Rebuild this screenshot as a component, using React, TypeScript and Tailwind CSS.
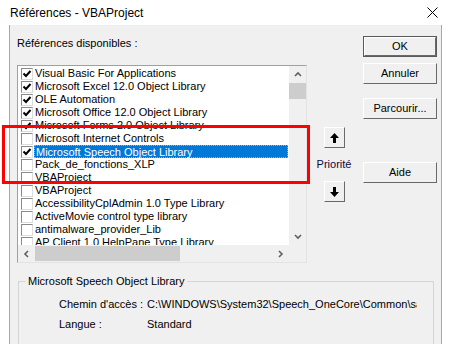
import React from "react";

type Ref = { name: string; checked: boolean; selected?: boolean };

const refs: Ref[] = [
	{ name: "Visual Basic For Applications", checked: true },
	{ name: "Microsoft Excel 12.0 Object Library", checked: true },
	{ name: "OLE Automation", checked: true },
	{ name: "Microsoft Office 12.0 Object Library", checked: true },
	{ name: "Microsoft Forms 2.0 Object Library", checked: true },
	{ name: "Microsoft Internet Controls", checked: false },
	{ name: "Microsoft Speech Object Library", checked: true, selected: true },
	{ name: "Pack_de_fonctions_XLP", checked: false },
	{ name: "VBAProject", checked: false },
	{ name: "VBAProject", checked: false },
	{ name: "AccessibilityCplAdmin 1.0 Type Library", checked: false },
	{ name: "ActiveMovie control type library", checked: false },
	{ name: "antimalware_provider_Lib", checked: false },
	{ name: "AP Client 1.0 HelpPane Type Library", checked: false },
];

function CheckBox({ checked }: { checked: boolean }) {
	return (
		<div className="w-[12px] h-[12px] ml-[3px] mr-[1px] shrink-0 bg-white border border-t-[#8a8a8a] border-l-[#8a8a8a] border-r-[#dcdcdc] border-b-[#dcdcdc] flex items-center justify-center">
			{checked && (
				<svg width="10" height="10" viewBox="0 0 10 10">
					<path d="M1.5 4.5 L4 7 L8.5 2" fill="none" stroke="#000" strokeWidth="2" />
				</svg>
			)}
		</div>
	);
}

function Chevron({ dir }: { dir: "up" | "down" | "left" | "right" }) {
	const d = {
		up: "M2 6 L5 3 L8 6",
		down: "M2 3 L5 6 L8 3",
		left: "M6 2 L3 5 L6 8",
		right: "M3 2 L6 5 L3 8",
	}[dir];
	return (
		<svg width="10" height="10" viewBox="0 0 10 10">
			<path d={d} fill="none" stroke="#606060" strokeWidth="1.6" />
		</svg>
	);
}

function WinButton({ label, isDefault }: { label: string; isDefault?: boolean }) {
	return (
		<div
			className={
				isDefault
					? "w-[74px] h-[21px] border border-[#5a5a5a]"
					: "w-[74px] h-[21px]"
			}
		>
			<div className="w-full h-full bg-[#f0f0f0] border border-t-white border-l-white border-r-[#696969] border-b-[#696969] flex items-center justify-center text-[11px] text-black">
				{label}
			</div>
		</div>
	);
}

function ArrowButton({ up }: { up?: boolean }) {
	return (
		<div className="w-[21px] h-[21px] bg-[#f0f0f0] border border-t-white border-l-white border-r-[#696969] border-b-[#696969] flex items-center justify-center">
			<svg width="9" height="10" viewBox="0 0 9 10">
				{up ? (
					<path d="M4.5 0 L9 5 L6 5 L6 10 L3 10 L3 5 L0 5 Z" fill="#000" />
				) : (
					<path d="M4.5 10 L9 5 L6 5 L6 0 L3 0 L3 5 L0 5 Z" fill="#000" />
				)}
			</svg>
		</div>
	);
}

export default function App() {
	return (
		<div
			className="w-[451px] h-[344px] bg-white flex flex-col overflow-hidden relative"
			style={{ fontFamily: '"Liberation Sans", Arial, sans-serif' }}
		>
			{/* title bar */}
			<div className="h-[25px] shrink-0 flex items-center justify-between pl-[10px] pr-[13px]">
				<span className="text-[12px] text-black">Références - VBAProject</span>
				<svg width="11" height="11" viewBox="0 0 11 11">
					<path d="M0.5 0.5 L10.5 10.5 M10.5 0.5 L0.5 10.5" stroke="#000" strokeWidth="1" />
				</svg>
			</div>

			<div className="mx-[9px] flex-1 bg-[#f0f0f0] border-l border-r border-[#a8a8a8] overflow-hidden text-[11px] text-black">
				<div className="flex items-start">
					{/* list column */}
					<div className="ml-[7px] w-[290px] shrink-0">
						<div className="mt-[12px] h-[13px] leading-[13px]">Références disponibles :</div>
						<div className="mt-[15px] h-[198px] border border-t-[#a0a0a0] border-l-[#a0a0a0] border-r-[#e3e3e3] border-b-[#e3e3e3] bg-white flex flex-col">
							<div className="flex flex-1 min-h-0">
								<div className="flex-1 pt-[1px] overflow-hidden">
									{refs.map((r, i) => (
										<div key={i} className="h-[13px] flex items-center whitespace-nowrap">
											<CheckBox checked={r.checked} />
											<span
												className={
													r.selected
														? "h-[13px] leading-[12px] bg-[#0078d7] text-white pl-[1px] w-[254px] border border-dotted border-[#f5a623]"
														: "h-[13px] leading-[13px] pl-[1px]"
												}
											>
												{r.name}
											</span>
										</div>
									))}
								</div>
								<div className="w-[17px] shrink-0 bg-[#f0f0f0] flex flex-col">
									<div className="h-[17px] flex items-center justify-center">
										<Chevron dir="up" />
									</div>
									<div className="h-[16px] bg-[#cdcdcd]"></div>
									<div className="flex-1"></div>
									<div className="h-[17px] flex items-center justify-center">
										<Chevron dir="down" />
									</div>
								</div>
							</div>
							<div className="h-[17px] shrink-0 flex bg-[#f0f0f0]">
								<div className="w-[17px] flex items-center justify-center">
									<Chevron dir="left" />
								</div>
								<div className="flex-1 flex items-center">
									<div className="w-[145px] h-[15px] bg-[#cdcdcd]"></div>
								</div>
								<div className="w-[17px] flex items-center justify-center">
									<Chevron dir="right" />
								</div>
								<div className="w-[17px] bg-[#f0f0f0]"></div>
							</div>
						</div>
					</div>

					{/* priority column */}
					<div className="w-[38px] ml-[8px] mt-[102px] flex flex-col items-center">
						<ArrowButton up />
						<div className="mt-[10px] h-[13px] leading-[13px] text-[#0a0a40]">Priorité</div>
						<div className="mt-[10px]">
							<ArrowButton />
						</div>
					</div>

					{/* buttons column */}
					<div className="ml-[10px] mt-[11px] flex flex-col">
						<WinButton label="OK" isDefault />
						<div className="mt-[6px]">
							<WinButton label="Annuler" />
						</div>
						<div className="mt-[14px]">
							<WinButton label="Parcourir..." />
						</div>
						<div className="mt-[43px]">
							<WinButton label="Aide" />
						</div>
					</div>
				</div>

				{/* details group */}
				<fieldset className="ml-[8px] mr-[7px] mt-[12px] border border-[#d5d5d5] h-[100px] p-0">
					<legend className="ml-[7px] px-[2px] leading-[13px]">Microsoft Speech Object Library</legend>
					<div className="pl-[40px]">
						<div className="flex mt-[10px] h-[13px] leading-[13px] whitespace-nowrap">
							<span className="w-[88px] shrink-0">Chemin d'accès :</span>
							<span className="w-[270px] overflow-hidden">
								C:\WINDOWS\System32\Speech_OneCore\Common\sapi_onecore.dll
							</span>
						</div>
						<div className="flex mt-[7px] h-[13px] leading-[13px]">
							<span className="w-[88px] shrink-0">Langue :</span>
							<span>Standard</span>
						</div>
					</div>
				</fieldset>
			</div>

			{/* highlight rectangle drawn over the list */}
			<div className="absolute left-[2px] top-[125px] w-[308px] h-[59px] border-[3px] border-[#ff0000] pointer-events-none"></div>
		</div>
	);
}
